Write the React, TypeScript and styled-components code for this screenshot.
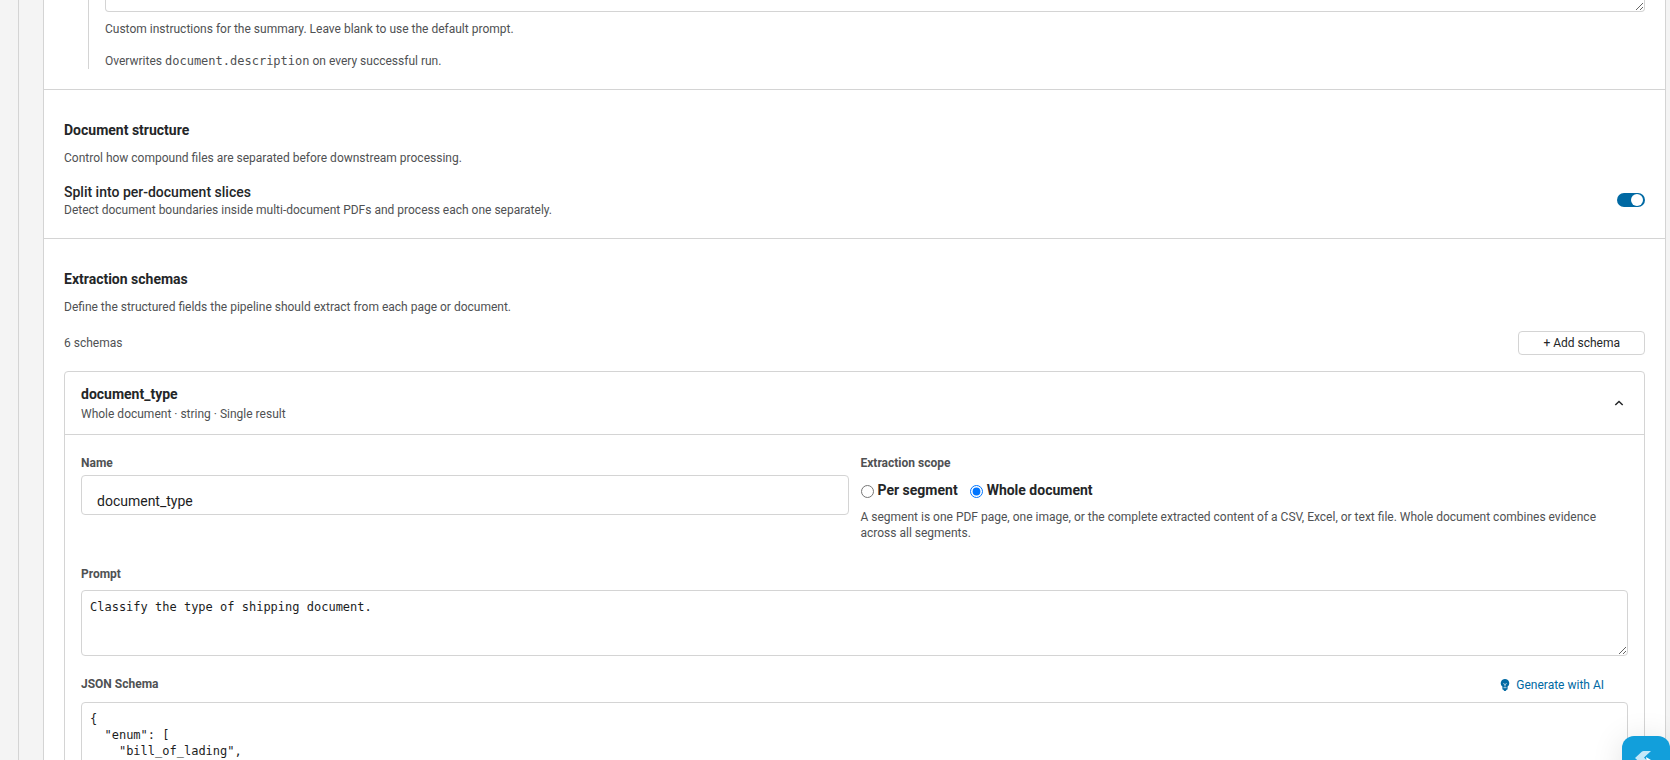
import React from "react";
import styled, { createGlobalStyle } from "styled-components";

const line = "#d4d4d4";
const ink = "#242628";
const muted = "#4f5153";
const blue = "#0069a3";

const GlobalStyle = createGlobalStyle`
  *, *::before, *::after { box-sizing: border-box; }
  html, body { margin: 0; background: #f4f4f4; }
  body {
    height: 100vh;
    overflow: hidden;
    font-family: Roboto, "Liberation Sans", sans-serif;
    font-size: 12px;
    line-height: 16px;
    color: ${muted};
  }
  h2, h3, p { margin: 0; }
  button, input, textarea { font-family: inherit; }
`;

const Page = styled.main`
  margin-left: 18px;
  padding: 0 4px 0 24px;
  border-left: 1px solid ${line};
`;

const Panel = styled.div`
  background: #fff;
  border: solid ${line};
  border-width: 0 1px;
`;

const Section = styled.section`
  padding: 32px 20px 20px;
  border-top: 1px solid ${line};
`;

const SummarySection = styled.section`
  padding: 0 20px 20px;
`;

const Nested = styled.div`
  margin-left: 24px;
  padding-left: 16px;
  border-left: 1px solid ${line};
`;

const TextArea = styled.textarea<{ $height: number }>`
  display: block;
  width: 100%;
  height: ${(p) => p.$height}px;
  padding: 8px;
  border: 1px solid ${line};
  border-radius: 4px;
  background: #fff;
  color: #1c1d1e;
  font: 12px/16px "DejaVu Sans Mono", monospace;
  resize: vertical;
  overflow: hidden;
  outline: none;
`;

const SummaryArea = styled(TextArea)`
  padding: 0 8px;
  border-top: 0;
  border-radius: 0 0 4px 4px;
  margin-bottom: 9px;
`;

const Help = styled.p`
  & + & { margin-top: 16px; }
`;

const Code = styled.code`
  font-family: "DejaVu Sans Mono", monospace;
`;

const SectionTitle = styled.h2`
  font-size: 14px;
  line-height: 16px;
  font-weight: 700;
  color: ${ink};
  margin-bottom: 12px;
`;

const SettingRow = styled.div`
  display: flex;
  align-items: center;
  justify-content: space-between;
  margin-top: 16px;
`;

const SettingName = styled.h3`
  font-size: 14px;
  line-height: 20px;
  font-weight: 500;
  color: ${ink};
`;

const Switch = styled.input`
  appearance: none;
  width: 28px;
  height: 14px;
  margin: 0;
  border-radius: 7px;
  background: #8d8d8d;
  display: flex;
  align-items: center;
  padding: 0 2px;
  &::before {
    content: "";
    width: 12px;
    height: 12px;
    border-radius: 50%;
    background: #fff;
  }
  &:checked { background: ${blue}; justify-content: flex-end; }
`;

const Toolbar = styled.div`
  display: flex;
  align-items: center;
  justify-content: space-between;
  margin: 16px 0;
`;

const AddButton = styled.button`
  height: 24px;
  padding: 0 24px;
  border: 1px solid ${line};
  border-radius: 4px;
  background: #fff;
  font-size: 12px;
  line-height: 16px;
  color: ${ink};
`;

const SchemaCard = styled.article`
  border: 1px solid ${line};
  border-radius: 4px;
`;

const SchemaHeader = styled.header`
  display: flex;
  align-items: center;
  justify-content: space-between;
  padding: 12px 16px;
  border-bottom: 1px solid ${line};
`;

const SchemaName = styled.h3`
  font-size: 14px;
  line-height: 20px;
  margin-bottom: 2px;
  font-weight: 700;
  color: ${ink};
`;

const IconButton = styled.button`
  display: grid;
  place-items: center;
  width: 18px;
  height: 18px;
  padding: 0;
  border: 0;
  background: none;
  color: ${ink};
`;

const SchemaBody = styled.div`
  padding: 20px 16px;
`;

const Columns = styled.div`
  display: grid;
  grid-template-columns: 1fr 1fr;
  gap: 12px;
  margin-bottom: 25px;
`;

const Label = styled.label`
  display: block;
  font-weight: 700;
`;

const NameInput = styled.input`
  display: block;
  width: 100%;
  height: 40px;
  margin-top: 4px;
  padding: 12px 15px 0;
  border: 1px solid ${line};
  border-radius: 4px;
  background: #fff;
  font-size: 14px;
  color: #1c1d1e;
  outline: none;
`;

const Scope = styled.fieldset`
  min-width: 0;
  margin: 0;
  padding: 0;
  border: 0;
`;

const Legend = styled.legend`
  padding: 0;
  font-weight: 700;
`;

const Options = styled.div`
  display: flex;
  gap: 12px;
  margin: 9px 0;
`;

const Option = styled.label`
  display: flex;
  gap: 4px;
  font-size: 14px;
  line-height: 20px;
  font-weight: 700;
  color: ${ink};
`;

const Radio = styled.input`
  width: 13px;
  height: 13px;
  margin: 5px 0 0;
`;

const PromptArea = styled(TextArea)`
  margin: 8px 0 20px;
`;

const FieldHead = styled.div`
  display: flex;
  justify-content: space-between;
  align-items: flex-start;
  margin-bottom: 8px;
`;

const LinkButton = styled.button`
  display: flex;
  align-items: center;
  gap: 6px;
  margin-right: 24px;
  padding: 0;
  border: 0;
  background: none;
  font-size: 12px;
  line-height: 18px;
  color: ${blue};
`;

const ChatButton = styled.button`
  position: fixed;
  right: 0;
  bottom: -24px;
  width: 48px;
  height: 48px;
  padding: 0;
  border: 0;
  border-radius: 12px;
  background: #129fdb;
  box-shadow: 0 4px 32px rgba(0, 0, 0, 0.12);
`;

const schemaText = `{
  "enum": [
    "bill_of_lading",
    "commercial_invoice",
    "packing_list"
  ],
  "type": "string"
}`;

function Bulb() {
  return (
    <svg width="10" height="12" viewBox="0 0 10 12" aria-hidden="true">
      <path d="M5 0a4.2 4.2 0 0 0-2.6 7.5V10c0 .4.3.7.7.7h.4c.2.8.8 1.3 1.5 1.3s1.3-.5 1.5-1.3h.4c.4 0 .7-.3.7-.7V7.500A4.200 4.200 0 0 0 5 0Z" fill="currentColor" />
      <path d="M3.300 4.500 5 5.500l1.700-1M5 5.500v2M3.500 8.700h3" stroke="#fff" strokeWidth=".7" fill="none" />
    </svg>
  );
}

export default function App() {
  return (
    <>
      <GlobalStyle />
      <Page>
        <Panel>
          <SummarySection>
            <Nested>
              <SummaryArea $height={12} aria-label="Summary prompt" />
              <Help>Custom instructions for the summary. Leave blank to use the default prompt.</Help>
              <Help>
                Overwrites <Code>document.description</Code> on every successful run.
              </Help>
            </Nested>
          </SummarySection>

          <Section>
            <SectionTitle>Document structure</SectionTitle>
            <p>Control how compound files are separated before downstream processing.</p>
            <SettingRow>
              <label htmlFor="split">
                <SettingName>Split into per-document slices</SettingName>
                <p>Detect document boundaries inside multi-document PDFs and process each one separately.</p>
              </label>
              <Switch id="split" type="checkbox" role="switch" defaultChecked />
            </SettingRow>
          </Section>

          <Section>
            <SectionTitle>Extraction schemas</SectionTitle>
            <p>Define the structured fields the pipeline should extract from each page or document.</p>
            <Toolbar>
              <span>6 schemas</span>
              <AddButton type="button">+ Add schema</AddButton>
            </Toolbar>
            <SchemaCard>
              <SchemaHeader>
                <div>
                  <SchemaName>document_type</SchemaName>
                  <p>Whole document · string · Single result</p>
                </div>
                <IconButton type="button" aria-label="Collapse schema">
                  <svg width="10" height="8" viewBox="0 0 10 8" aria-hidden="true">
                    <path d="m1.300 6 3.700-3.500L8.700 6" fill="none" stroke="currentColor" strokeWidth="1.500" />
                  </svg>
                </IconButton>
              </SchemaHeader>
              <SchemaBody>
                <Columns>
                  <div>
                    <Label htmlFor="name">Name</Label>
                    <NameInput id="name" type="text" defaultValue="document_type" />
                  </div>
                  <Scope>
                    <Legend>Extraction scope</Legend>
                    <Options>
                      <Option>
                        <Radio type="radio" name="scope" />
                        Per segment
                      </Option>
                      <Option>
                        <Radio type="radio" name="scope" defaultChecked />
                        Whole document
                      </Option>
                    </Options>
                    <p>
                      A segment is one PDF page, one image, or the complete extracted content of a CSV, Excel, or text
                      file. Whole document combines evidence across all segments.
                    </p>
                  </Scope>
                </Columns>
                <Label htmlFor="prompt">Prompt</Label>
                <PromptArea id="prompt" $height={66} defaultValue="Classify the type of shipping document." />
                <FieldHead>
                  <Label htmlFor="json">JSON Schema</Label>
                  <LinkButton type="button">
                    <Bulb />
                    Generate with AI
                  </LinkButton>
                </FieldHead>
                <TextArea id="json" $height={160} defaultValue={schemaText} spellCheck={false} />
              </SchemaBody>
            </SchemaCard>
          </Section>
        </Panel>
      </Page>
      <ChatButton type="button" aria-label="Open assistant">
        <svg width="48" height="48" viewBox="0 0 48 48" aria-hidden="true">
          <path d="M13 22 20 15.500q.6-.5 1.500-.5H29l-7 6.500 7 7h-9Z" fill="#c5e8f8" />
          <path d="m24 21 5 3-3 1-1 3Z" fill="#fff" />
        </svg>
      </ChatButton>
    </>
  );
}
